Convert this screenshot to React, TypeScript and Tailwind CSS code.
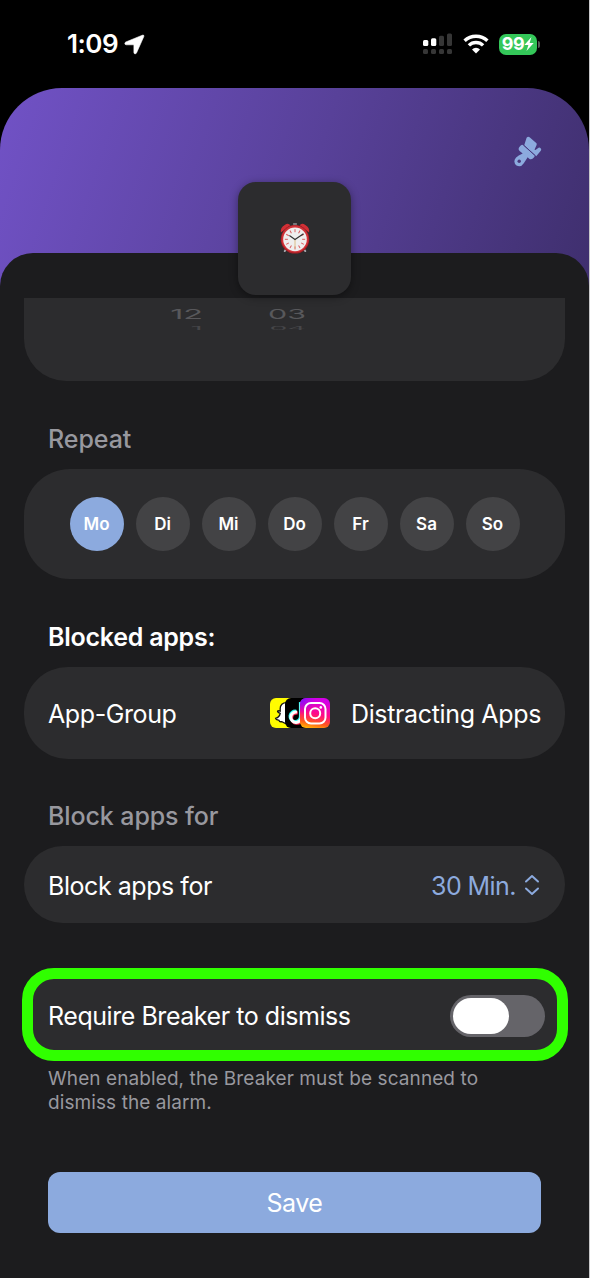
import React from "react";

const days = ["Mo", "Di", "Mi", "Do", "Fr", "Sa", "So"];

const StatusBar = () => {
    return (
        <div className="flex h-[88px] shrink-0 items-center pl-[67px] pr-[49px]">
            <span className="text-[26px] font-semibold leading-none tracking-[-0.5px] text-white">1:09</span>
            <svg width="21" height="21" viewBox="0 0 21 21" className="ml-1.5">
                <path d="M18.4 1.2 1.8 8C.3 8.7.6 10.8 2.2 10.8H9.2q.7 0 .7.7V18.4c0 1.7 1.9 2 2.6.5L19.8 2.6c.5-1.1-.4-1.8-1.4-1.4Z" fill="#fff" stroke="#fff" strokeWidth="0.6" />
            </svg>
            <div className="ml-auto flex items-center">
                <svg width="30" height="22" viewBox="0 0 30 22">
                    <g fill="#fff">
                        <rect x="0" y="7" width="5.3" height="6" rx="1.5" />
                        <rect x="8" y="5.2" width="5.3" height="7.8" rx="1.5" />
                    </g>
                    <g fill="#363636">
                        <rect x="16" y="2.7" width="5" height="10.3" rx="1.5" />
                        <rect x="24" y="0.5" width="5" height="12.5" rx="1.5" />
                        <rect x="0" y="16" width="5" height="5" rx="1.5" />
                        <rect x="8" y="16" width="5" height="5" rx="1.5" />
                        <rect x="16" y="16" width="5" height="5" rx="1.5" />
                        <rect x="24" y="16" width="5" height="5" rx="1.5" />
                    </g>
                </svg>
                <svg width="26" height="20" viewBox="0 0 26 20" className="ml-2.5">
                    <g fill="none" stroke="#fff" strokeWidth="3.4">
                        <path d="M1.6 6.8a16.4 16.4 0 0 1 22.8 0" />
                        <path d="M5.9 11.4a10.2 10.2 0 0 1 14.2 0" />
                    </g>
                    <path d="M13 19.4 9 15.4a5.8 5.8 0 0 1 8 0Z" fill="#fff" />
                </svg>
                <div className="ml-2.5 flex h-[21px] w-[38px] items-center justify-center rounded-[7px] bg-[#34c759]">
                    <span className="text-[18px] font-bold leading-none tracking-[-0.4px] text-white">99</span>
                    <svg width="10" height="14" viewBox="0 0 10 14">
                        <path d="M7.5 0 .4 8h4L2.5 14 9.7 6H5.6Z" fill="#fff" />
                    </svg>
                </div>
                <div className="ml-px h-[7px] w-[2px] rounded-r-full bg-[#555]" />
            </div>
        </div>
    );
};

const BrushIcon = () => {
    return (
        <svg width="28" height="32" viewBox="0 0 28 32" fill="#8caade">
            <path d="M12.6 1.8q1.4-1.8 3-.6l6.6 5.9q.9.8.4 1.8l-1.8 4q-.6 1.6 1 .8l2.8-2q1-.6 1.8.3 1.5 1.4.4 2.7l-4.6 5.5L10.2 9.2Z" />
            <path d="M9.4 9.2 19.4 18.2q2.5 1.2.5 3.3-2.3 3-5 .9l-1.2-1.2-3.9 6q-3 4.6-7.3 2.2-4.1-3.6-.4-7.8 2-2.1 6.6-4L5.6 15q-2.1-2 .2-4.6 1.8-2.3 3.6-1.2Z" />
            <path d="m9.4 9 12 10.8" stroke="#46357c" strokeWidth="1" />
            <circle cx="5.2" cy="25.2" r="1.7" fill="#49377c" />
        </svg>
    );
};

const AlarmClock = () => {
    const ticks = [0, 30, 60, 90, 120, 150, 180, 210, 240, 270, 300, 330];
    return (
        <svg width="30" height="32" viewBox="0 0 32 34" className="-mt-0.5">
            <path d="m8 27-3 4M24 27l3 4" stroke="#a9a9ae" strokeWidth="2" strokeLinecap="round" />
            <path d="M14 1h4v4h-4z" fill="#77777b" />
            <path d="M1 11Q0 6 5 3 9 .5 11 3.5Z" fill="#d22f35" />
            <path d="M31 11Q32 6 27 3 23 .5 21 3.5Z" fill="#d22f35" />
            <circle cx="16" cy="18.4" r="15.2" fill="#a61e25" />
            <circle cx="16" cy="18" r="14.4" fill="#cf3238" />
            <circle cx="16" cy="18.4" r="12.6" fill="#efeeee" />
            {ticks.map((angle) => (
                <path key={angle} d="M16 7.6v3.2" stroke="#d9585b" strokeWidth="1" transform={`rotate(${angle} 16 18.4)`} />
            ))}
            <path d="M16 18v10" stroke="#d6b06a" strokeWidth="0.8" />
            <path d="m10 14.4 6 4.2 9-6.2" stroke="#333" strokeWidth="1.2" fill="none" />
        </svg>
    );
};

const AppIcons = () => {
    return (
        <div className="flex shrink-0">
            <svg width="30" height="30" viewBox="0 0 30 30" className="rounded-[6px] bg-[#fffc00]">
                <path d="M17 4.6c-4.6-.2-6.8 2.4-6.8 6v2.6l-2.2-.5c-1 .6-.4 1.8 2.2 2.6-.4 2.6-2.4 4.3-4.6 5 .3 1.6 2.2 1.7 3.4 2 .3 1.3.8 1.7 2.4 1.4 1.8.1 2.6 2.1 5.6 2.1Z" fill="#fff" stroke="#111" strokeWidth="1.3" />
            </svg>
            <svg width="30" height="30" viewBox="0 0 30 30" className="-ml-[15px] rounded-[6px] bg-black">
                <g fill="none" strokeWidth="3">
                    <path d="M11.2 13.2a5.2 5.2 0 1 0 4.2 5V4" stroke="#25f4ee" />
                    <path d="M12.8 15a5.2 5.2 0 1 0 4.2 5V6" stroke="#fe2c55" />
                    <path d="M12 14.1a5.2 5.2 0 1 0 4.2 5V5" stroke="#fff" />
                </g>
            </svg>
            <svg width="30" height="30" viewBox="0 0 30 30" className="-ml-[15px] rounded-[6px]">
                <defs>
                    <linearGradient id="igBase" x1="0.2" y1="0" x2="0" y2="1">
                        <stop offset="0" stopColor="#d400e6" />
                        <stop offset="0.45" stopColor="#ff0a86" />
                        <stop offset="0.75" stopColor="#ff5a1c" />
                        <stop offset="1" stopColor="#ffca00" />
                    </linearGradient>
                    <radialGradient id="igCorner" cx="0" cy="0" r="0.55">
                        <stop offset="0" stopColor="#6a17ff" />
                        <stop offset="1" stopColor="#a000ff" stopOpacity="0" />
                    </radialGradient>
                </defs>
                <rect width="30" height="30" fill="url(#igBase)" />
                <rect width="30" height="30" fill="url(#igCorner)" />
                <g fill="none" stroke="#fff" strokeWidth="2">
                    <rect x="5" y="5" width="20.5" height="20.5" rx="6" />
                    <circle cx="15.2" cy="15.2" r="5" />
                </g>
                <circle cx="20.8" cy="9.4" r="1.3" fill="#fff" />
            </svg>
        </div>
    );
};

const App = () => {
    return (
        <div className="h-[1278px] w-[590px] overflow-hidden border-r border-[#c8c8ca] bg-black font-['Inter',sans-serif]">
            <StatusBar />

            {/* Purple header runs behind the rounded top of the sheet */}
            <div className="rounded-t-[62px] bg-[linear-gradient(108deg,#7152c6_0%,#584199_52%,#3f2f6e_100%)] bg-[length:100%_198px] bg-no-repeat">
                <div className="flex h-[165px] justify-end pr-[47px] pt-12">
                    <BrushIcon />
                </div>

                <div className="flex h-[1025px] flex-col rounded-t-[33px] bg-[#1c1c1e] px-6">
                    <div className="relative z-10 -mt-[71px] flex size-[113px] shrink-0 items-center justify-center self-center rounded-[18px] bg-[#2c2c2e] shadow-[0_2px_8px_rgba(0,0,0,0.4)]">
                        <AlarmClock />
                    </div>

                    {/* Lower end of the time wheel */}
                    <div className="mt-[3px] h-[83px] shrink-0 rounded-b-[42px] bg-[#2c2c2e] pl-[143px] text-[19px] leading-none text-[#58585b]">
                        <div className="flex h-[27px] origin-top translate-y-px scale-y-[0.72] items-center pt-4">
                            <span className="w-9 origin-right scale-x-[1.7] text-right">12</span>
                            <span className="ml-[67px] w-9 origin-right scale-x-[1.6] text-right">03</span>
                        </div>
                        <div className="flex h-3 origin-top translate-y-0.5 scale-y-[0.25] items-center text-[#464649]">
                            <span className="w-9 origin-right scale-x-[1.6] text-right">1</span>
                            <span className="ml-[67px] w-9 origin-right scale-x-[1.5] text-right">04</span>
                        </div>
                    </div>

                    <h2 className="mt-[42px] pl-6 text-[25px] font-medium leading-8 tracking-[-0.05px] text-[#98989f]">Repeat</h2>
                    <div className="mt-[14px] flex h-[110px] shrink-0 items-center justify-center gap-3 rounded-[46px] bg-[#2c2c2e]">
                        {days.map((day) => (
                            <button
                                key={day}
                                className={`flex size-[54px] items-center justify-center rounded-full pt-0.5 text-[17px] font-semibold text-white ${day === "Mo" ? "bg-[#8caade]" : "bg-[#434345]"}`}
                            >
                                {day}
                            </button>
                        ))}
                    </div>

                    <h2 className="mt-[42px] pl-6 text-[25px] font-semibold leading-8 tracking-[-0.25px] text-white">Blocked apps:</h2>
                    <div className="mt-[14px] flex h-[92px] shrink-0 items-center rounded-[44px] bg-[#2c2c2e] px-6 text-[25px] text-white">
                        <span className="mr-auto pt-[3px] tracking-[-0.4px]">App-Group</span>
                        <AppIcons />
                        <span className="ml-[21px] pt-[3px] tracking-[-0.35px]">Distracting Apps</span>
                    </div>

                    <h2 className="mt-[41px] pl-6 text-[25px] font-medium leading-8 tracking-[-0.1px] text-[#98989f]">Block apps for</h2>
                    <div className="mt-[14px] flex h-[77px] shrink-0 items-center rounded-full bg-[#2c2c2e] px-6 text-[25px] text-white">
                        <span className="mr-auto pt-1 tracking-[-0.45px]">Block apps for</span>
                        <span className="pt-1 tracking-[-0.55px] text-[#8caade]">30 Min.</span>
                        <svg width="16" height="22" viewBox="0 0 16 22" className="ml-2 mr-px" fill="none" stroke="#8caade" strokeWidth="2" strokeLinecap="round" strokeLinejoin="round">
                            <path d="m2 7.5 6-5.5 6 5.5M2 14.5l6 5.5 6-5.5" />
                        </svg>
                    </div>

                    <div className="-ml-[2px] -mr-[3px] mt-[45px] flex h-[93px] shrink-0 items-center rounded-[32px] border-[11px] border-[#30ff00] bg-[#2c2c2e] pl-[15px] pr-3 text-[25px] text-white">
                        <span className="mr-auto pt-1 tracking-[-0.45px]">Require Breaker to dismiss</span>
                        <div className="mt-0.5 flex h-[42px] w-[95px] items-center rounded-full bg-[#656469] px-[3px]">
                            <div className="h-9 w-14 rounded-full bg-white" />
                        </div>
                    </div>

                    <p className="mt-[6px] whitespace-nowrap pl-6 text-[19px] leading-6 tracking-[0.09px] text-[#98989f]">
                        When enabled, the Breaker must be scanned to
                        <br />
                        dismiss the alarm.
                    </p>

                    <button className="mx-6 mt-[57px] h-[61px] shrink-0 rounded-[12px] bg-[#8caade] pt-0.5 text-[25px] tracking-[-0.5px] text-white">Save</button>
                </div>
            </div>
        </div>
    );
};

export default App;
